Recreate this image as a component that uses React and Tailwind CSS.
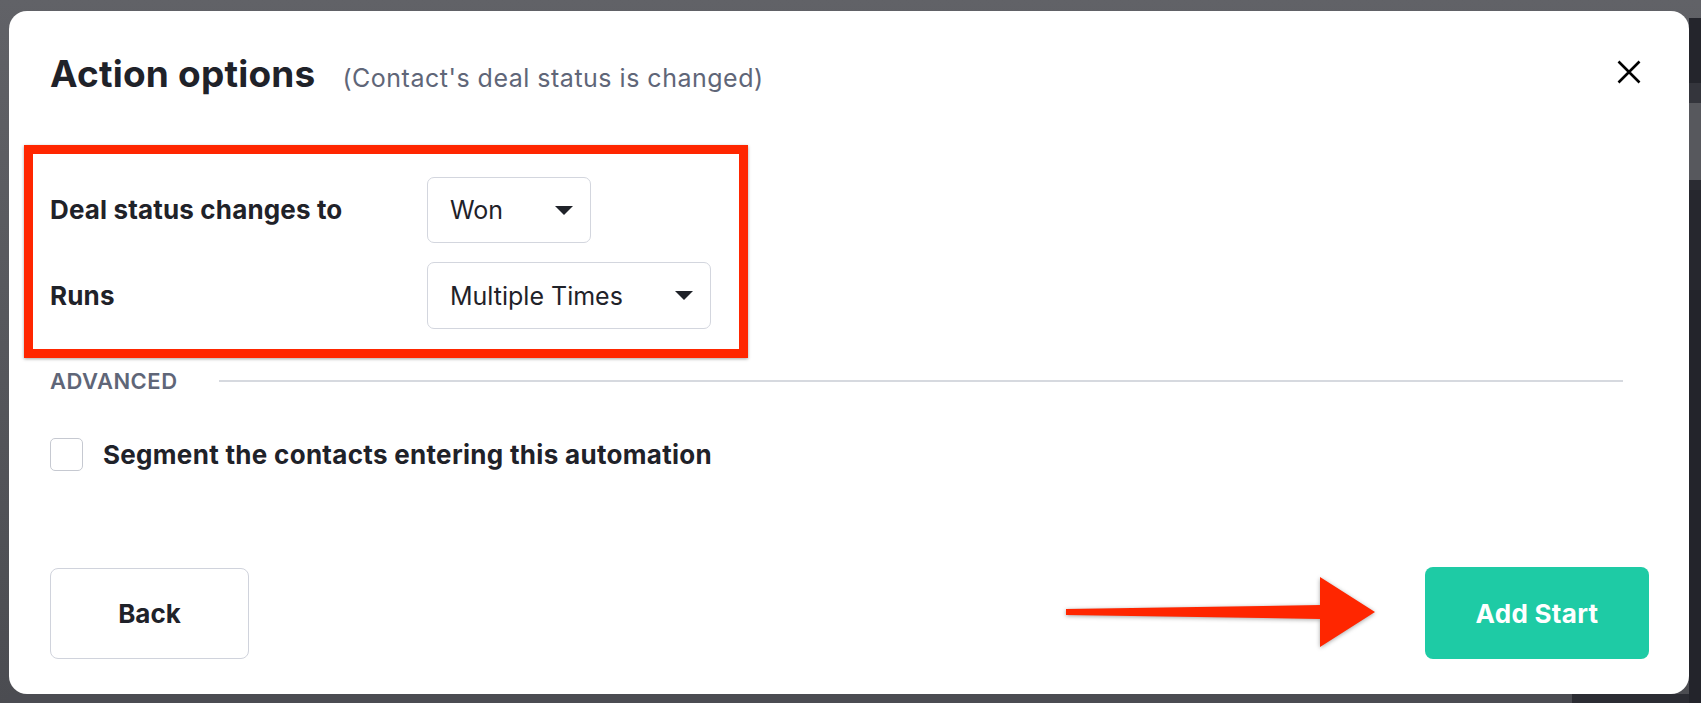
import React from 'react';

const font = { fontFamily: 'Inter, "Noto Sans", sans-serif' };

function Caret() {
  return (
    <svg width="18" height="9" viewBox="0 0 18 9" className="shrink-0">
      <polygon points="0,0 18,0 9,9" fill="#1f2229" />
    </svg>
  );
}

function Select({ value, width }) {
  return (
    <div className={`h-full ${width} flex items-center justify-between pl-[22px] pr-[17px] border-[1.5px] border-[#d3d6de] rounded-[7px] bg-white`}>
      <span className="text-[25px] leading-[30px] text-[#1f2229]">{value}</span>
      <Caret />
    </div>
  );
}

export default function App() {
  return (
    <div className="w-[1701px] h-[703px] flex overflow-hidden bg-gradient-to-b from-[#616267] to-[#4b4c51]" style={font}>
      <div className="w-[9px] shrink-0" />
      <div className="flex flex-col pt-[11px]">
        {/* MODAL */}
        <div className="relative w-[1680px] h-[683px] bg-white rounded-[18px] flex flex-col pl-[41px] pr-[48px]">
          <div className="flex items-start justify-between pt-[41px]">
            <div className="flex items-baseline h-[44px]">
              <h1 className="text-[37px] leading-[44px] font-bold text-[#1f2229] tracking-[0.2px]">Action options</h1>
              <span className="ml-[27px] text-[25px] leading-[30px] text-[#5f6678] tracking-[0.5px]">(Contact's deal status is changed)</span>
            </div>
            <svg width="24" height="24" viewBox="0 0 24 24" className="mt-[8px]">
              <path d="M1.5 1.5 L22.5 22.5 M22.5 1.5 L1.5 22.5" stroke="#000" strokeWidth="2.6" />
            </svg>
          </div>

          {/* OPTIONS */}
          <div className="mt-[81px] flex flex-col gap-[19px]">
            <div className="flex items-center h-[66px]">
              <span className="w-[377px] text-[26px] leading-[30px] font-bold text-[#1f2229] tracking-[0.15px]">Deal status changes to</span>
              <Select value="Won" width="w-[164px]" />
            </div>
            <div className="flex items-center h-[67px]">
              <span className="w-[377px] text-[26px] leading-[30px] font-bold text-[#1f2229] tracking-[0.15px]">Runs</span>
              <Select value="Multiple Times" width="w-[284px]" />
            </div>
          </div>

          <div className="mt-[39px] flex items-center h-[26px] pr-[18px]">
            <span className="text-[22px] leading-[26px] font-semibold text-[#5f6678] tracking-[0.5px]">ADVANCED</span>
            <div className="flex-1 ml-[41px] h-[2px] bg-[#d6d9df]" />
          </div>

          <div className="mt-[44px] flex items-center h-[33px]">
            <div className="w-[33px] h-[33px] rounded-[5px] border-[1.5px] border-[#c6c9d1]" />
            <span className="ml-[20px] text-[26px] leading-[32px] font-bold text-[#1f2229] tracking-[0.3px]">Segment the contacts entering this automation</span>
          </div>

          <div className="mt-[96px] flex items-center justify-between -mr-[8px]">
            <button className="w-[199px] h-[91px] rounded-[8px] border-[1.5px] border-[#d0d3dc] bg-white text-[26px] font-bold text-[#1f2229]">Back</button>
            <button className="w-[224px] h-[92px] rounded-[8px] bg-[#1ecba5] text-[26px] font-bold text-white tracking-[0.3px]">Add Start</button>
          </div>

          {/* annotation: red box */}
          <div className="absolute left-[15px] top-[134px] w-[724px] h-[213px] border-[9px] border-[#ff2600] shadow-[0_1px_3px_rgba(0,0,0,0.35)]" />
          {/* annotation: arrow */}
          <svg width="309" height="70" viewBox="0 0 309 70" className="absolute left-[1057px] top-[566px]" style={{ filter: 'drop-shadow(0 1px 2px rgba(0,0,0,0.35))' }}>
            <polygon points="0,32 254,28 254,0 309,35 254,70 254,42 0,38" fill="#ff2600" />
          </svg>
        </div>
        <div className="flex h-[9px]">
          <div className="w-[1563px] bg-[#4b4c52]" />
          <div className="flex-1 bg-[#2b2c33]" />
        </div>
      </div>
      {/* right strip of underlying page */}
      <div className="w-[12px] flex flex-col">
        <div className="h-[18px]" />
        <div className="h-[65px] bg-[#24252c]" />
        <div className="h-[20px] bg-[#34353c]" />
        <div className="h-[77px] bg-[#57585d]" />
        <div className="h-[10px] bg-[#2a2b32]" />
        <div className="h-[100px] bg-[#26272e]" />
        <div className="flex-1 bg-[#23242b]" />
      </div>
    </div>
  );
}
